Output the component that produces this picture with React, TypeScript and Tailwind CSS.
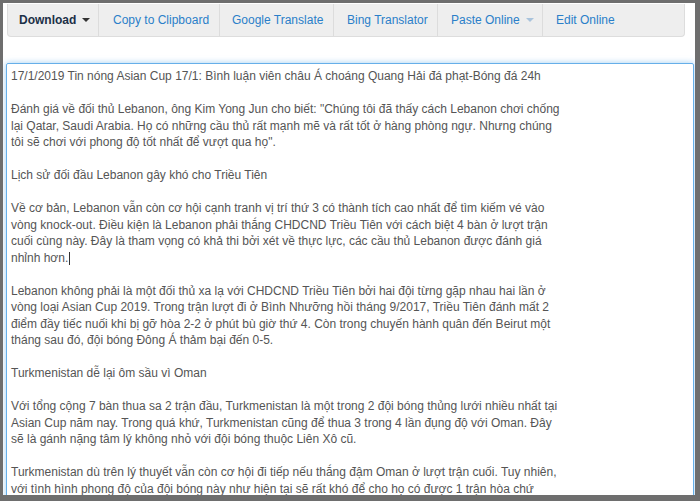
import React from "react";

const lines: string[] = [
  "17/1/2019 Tin nóng Asian Cup 17/1: Bình luận viên châu Á choáng Quang Hải đá phạt-Bóng đá 24h",
  "",
  "Đánh giá về đối thủ Lebanon, ông Kim Yong Jun cho biết: \"Chúng tôi đã thấy cách Lebanon chơi chống",
  "lại Qatar, Saudi Arabia. Họ có những cầu thủ rất mạnh mẽ và rất tốt ở hàng phòng ngự. Nhưng chúng",
  "tôi sẽ chơi với phong độ tốt nhất để vượt qua họ\".",
  "",
  "Lịch sử đối đầu Lebanon gây khó cho Triều Tiên",
  "",
  "Về cơ bản, Lebanon vẫn còn cơ hội cạnh tranh vị trí thứ 3 có thành tích cao nhất để tìm kiếm vé vào",
  "vòng knock-out. Điều kiện là Lebanon phải thắng CHDCND Triều Tiên với cách biệt 4 bàn ở lượt trận",
  "cuối cùng này. Đây là tham vọng có khả thi bởi xét về thực lực, các cầu thủ Lebanon được đánh giá",
  "nhỉnh hơn.",
  "",
  "Lebanon không phải là một đối thủ xa lạ với CHDCND Triều Tiên bởi hai đội từng gặp nhau hai lần ở",
  "vòng loại Asian Cup 2019. Trong trận lượt đi ở Bình Nhưỡng hồi tháng 9/2017, Triều Tiên đánh mất 2",
  "điểm đầy tiếc nuối khi bị gỡ hòa 2-2 ở phút bù giờ thứ 4. Còn trong chuyến hành quân đến Beirut một",
  "tháng sau đó, đội bóng Đông Á thảm bại đến 0-5.",
  "",
  "Turkmenistan dễ lại ôm sầu vì Oman",
  "",
  "Với tổng cộng 7 bàn thua sa 2 trận đầu, Turkmenistan là một trong 2 đội bóng thủng lưới nhiều nhất tại",
  "Asian Cup năm nay. Trong quá khứ, Turkmenistan cũng để thua 3 trong 4 lần đụng độ với Oman. Đây",
  "sẽ là gánh nặng tâm lý không nhỏ với đội bóng thuộc Liên Xô cũ.",
  "",
  "Turkmenistan dù trên lý thuyết vẫn còn cơ hội đi tiếp nếu thắng đậm Oman ở lượt trận cuối. Tuy nhiên,",
  "với tình hình phong độ của đội bóng này như hiện tại sẽ rất khó để cho họ có được 1 trận hòa chứ",
];

function Caret({ light }: { light?: boolean }) {
  return (
    <span
      className={
        "ml-[6px] inline-block h-0 w-0 border-x-[4px] border-t-[4px] border-x-transparent align-middle " +
        (light ? "border-t-[#a9c3dc]" : "border-t-[#333333]")
      }
    />
  );
}

export default function App() {
  const btn =
    "flex h-full items-center border-r border-[#dcdcdc] px-[12px] text-[12px] whitespace-nowrap";
  const blue = " text-[#2a7fc9]";
  return (
    <div
      className="h-[501px] w-[700px] overflow-hidden bg-[#6e6e6e] pl-[3px] pt-[3px]"
      style={{ fontFamily: '"Liberation Sans", Arial, sans-serif' }}
    >
      <div className="h-[492px] w-[692px] overflow-hidden bg-white">
        <div className="ml-[4px] mt-[1px] flex h-[33px] w-[678px] items-stretch rounded-b-[4px] border border-t-0 border-[#dddddd] bg-[#eeeeee]">
          <div className={btn + " w-[91px] pl-[11px] font-bold text-[#1c3047]"}>
            Download
            <Caret />
          </div>
          <div className={btn + blue + " w-[121px] pl-[14px]"}>Copy to Clipboard</div>
          <div className={btn + blue + " w-[114px] pl-[12px]"}>Google Translate</div>
          <div className={btn + blue + " w-[104px] pl-[13px]"}>Bing Translator</div>
          <div className={btn + blue + " w-[105px] pl-[13px]"}>
            Paste Online
            <Caret light />
          </div>
          <div className="flex h-full items-center pl-[13px] text-[12px] text-[#2a7fc9]">Edit Online</div>
        </div>
        <div className="ml-[3px] mt-[26px] h-[480px] w-[688px] rounded-[2px] border border-[#66afe9] px-[4px] pt-[4px] text-[12px] leading-[16.5px] text-[#555555] shadow-[0_0_6px_rgba(102,175,233,0.6)]">
          {lines.map((l, i) => (
            <div key={i} className="h-[16.5px] whitespace-pre">
              {l}
              {i === 11 ? <span className="ml-[1px] inline-block h-[13px] w-px bg-[#333] align-middle" /> : null}
            </div>
          ))}
        </div>
      </div>
    </div>
  );
}
